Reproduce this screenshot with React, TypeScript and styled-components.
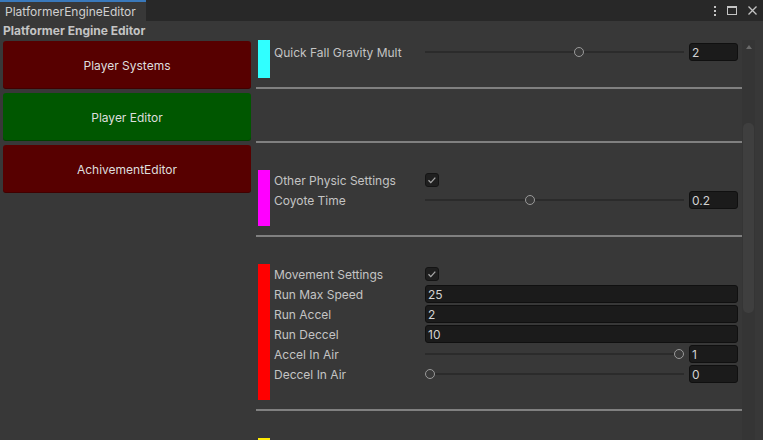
import * as React from 'react';
import styled, { createGlobalStyle } from 'styled-components';

const GlobalStyle = createGlobalStyle`
    html, body {
        margin: 0;
        padding: 0;
        background: #383838;
    }
    body {
        font-family: Inter, "Noto Sans", sans-serif;
        font-size: 12px;
        color: #c4c4c4;
        overflow: hidden;
    }
    * {
        box-sizing: border-box;
    }
`;

const colors = {
    bg: '#383838',
    tabBar: '#282828',
    label: '#c4c4c4',
    field: '#1b1b1b',
    fieldBorder: '#101010',
    divider: '#808080',
    accent: '#3a79bb'
};

const Window = styled.div`
    width: 763px;
    height: 440px;
    display: flex;
    flex-direction: column;
    background: ${colors.bg};
    overflow: hidden;
`;

const TabBar = styled.div`
    height: 21px;
    flex: none;
    display: flex;
    align-items: stretch;
    background: ${colors.tabBar};
`;

const Tab = styled.div`
    width: 146px;
    background: ${colors.bg};
    border-top: 2px solid ${colors.accent};
    padding-left: 5px;
    display: flex;
    align-items: center;
    color: #d0d0d0;
`;

const TabSpacer = styled.div`
    flex: 1;
`;

const TabIcons = styled.div`
    display: flex;
    align-items: center;
    gap: 11px;
    padding-right: 6px;

    svg {
        display: block;
    }
`;

const Header = styled.div`
    height: 19px;
    flex: none;
    padding-left: 3px;
    display: flex;
    align-items: center;
    font-weight: 700;
    color: ${colors.label};
`;

const Main = styled.div`
    flex: 1;
    min-height: 0;
    display: flex;
`;

const SidePanel = styled.div`
    width: 254px;
    flex: none;
    padding: 1px 3px 0;
    display: flex;
    flex-direction: column;
    gap: 4px;
`;

const NavButton = styled.div<{ $active?: boolean }>`
    height: 48px;
    border-radius: 3px;
    background: ${p => (p.$active ? '#005700' : '#570000')};
    box-shadow: inset 0 -1px 0 rgba(0, 0, 0, 0.25);
    color: #dedede;
    display: flex;
    align-items: center;
    justify-content: center;
`;

const ScrollView = styled.div`
    flex: 1;
    display: flex;
    padding-left: 2px;
    min-width: 0;
`;

const Viewport = styled.div`
    flex: 1;
    overflow: hidden;
`;

const Scrollbar = styled.div`
    width: 13px;
    flex: none;
    background: #353535;
    display: flex;
    flex-direction: column;
    align-items: center;
`;

const ScrollArrow = styled.div`
    height: 14px;
    display: flex;
    align-items: center;
    justify-content: center;

    &::before {
        content: '';
        border-left: 3.5px solid transparent;
        border-right: 3.5px solid transparent;
        border-bottom: 4px solid #6a6a6a;
    }
`;

const ScrollThumb = styled.div`
    width: 11px;
    height: 190px;
    margin-top: 69px;
    border-radius: 5px;
    background: #3f3f3f;
`;

const RightGutter = styled.div`
    width: 8px;
    flex: none;
`;

// the first section is scrolled partly out of view, so it has no top padding
const Section = styled.div<{ $clipped?: boolean }>`
    padding: ${p => (p.$clipped ? '0' : '27px')} 0 9px;
`;

const SectionBody = styled.div`
    display: flex;
    gap: 4px;
`;

const ColorBar = styled.div<{ $color: string }>`
    width: 12px;
    margin-left: 2px;
    flex: none;
    background: ${p => p.$color};
`;

const Rows = styled.div<{ $clipped?: boolean }>`
    flex: 1;
    display: flex;
    flex-direction: column;
    padding: ${p => (p.$clipped ? '2px' : '0')} 4px 16px 0;
`;

const Divider = styled.div`
    height: 2px;
    background: ${colors.divider};
`;

const Row = styled.div`
    height: 18px;
    margin: 1px 0;
    display: grid;
    grid-template-columns: 151px 1fr;
    align-items: center;
`;

const Label = styled.div`
    color: ${colors.label};
    white-space: nowrap;
`;

const Field = styled.div<{ $width?: number }>`
    height: 18px;
    width: ${p => (p.$width ? `${p.$width}px` : 'auto')};
    flex: none;
    background: ${colors.field};
    border: 1px solid ${colors.fieldBorder};
    border-radius: 3px;
    padding-left: 2px;
    color: #d2d2d2;
    display: flex;
    align-items: center;
`;

const Checkbox = styled.div`
    width: 14px;
    height: 14px;
    background: #1f1f1f;
    border: 1px solid #141414;
    border-radius: 3px;

    svg {
        display: block;
    }
`;

const SliderBox = styled.div`
    display: flex;
    align-items: center;
    gap: 5px;
`;

const Track = styled.div`
    flex: 1;
    height: 18px;
    position: relative;

    &::before {
        content: '';
        position: absolute;
        left: 0;
        right: 0;
        top: 8px;
        height: 2px;
        background: #2b2b2b;
    }
`;

const Thumb = styled.div<{ $pos: number }>`
    position: absolute;
    top: 4px;
    left: calc(${p => p.$pos} * (100% - 10px));
    width: 10px;
    height: 10px;
    border-radius: 50%;
    border: 1px solid #9a9a9a;
    background: #3a3a3a;
`;

type RowData =
    | { label: string; kind: 'toggle' }
    | { label: string; kind: 'text'; value: string }
    | { label: string; kind: 'slider'; value: string; pos: number };

type SectionData = { color: string; rows: RowData[] };

const sections: SectionData[] = [
    {
        color: '#30ffff',
        rows: [{ label: 'Quick Fall Gravity Mult', kind: 'slider', value: '2', pos: 0.6 }]
    },
    { color: 'transparent', rows: [] },
    {
        color: '#ff00ff',
        rows: [
            { label: 'Other Physic Settings', kind: 'toggle' },
            { label: 'Coyote Time', kind: 'slider', value: '0.2', pos: 0.4 }
        ]
    },
    {
        color: '#ff0000',
        rows: [
            { label: 'Movement Settings', kind: 'toggle' },
            { label: 'Run Max Speed', kind: 'text', value: '25' },
            { label: 'Run Accel', kind: 'text', value: '2' },
            { label: 'Run Deccel', kind: 'text', value: '10' },
            { label: 'Accel In Air', kind: 'slider', value: '1', pos: 1 },
            { label: 'Deccel In Air', kind: 'slider', value: '0', pos: 0 }
        ]
    },
    { color: '#ffeb04', rows: [] }
];

function CheckIcon() {
    return (
        <svg width="12" height="12" viewBox="0 0 12 12">
            <path d="M2.5 6.3 L4.8 8.6 L9.3 3.6" fill="none" stroke="#a8a8a8" strokeWidth="1.3" />
        </svg>
    );
}

function PropertyRow({ row }: { row: RowData }) {
    let control: React.ReactNode;
    if (row.kind === 'toggle') {
        control = (
            <Checkbox>
                <CheckIcon />
            </Checkbox>
        );
    } else if (row.kind === 'text') {
        control = <Field>{row.value}</Field>;
    } else {
        control = (
            <SliderBox>
                <Track>
                    <Thumb $pos={row.pos} />
                </Track>
                <Field $width={49}>{row.value}</Field>
            </SliderBox>
        );
    }
    return (
        <Row>
            <Label>{row.label}</Label>
            {control}
        </Row>
    );
}

export default function App() {
    return (
        <Window>
            <GlobalStyle />
            <TabBar>
                <Tab>PlatformerEngineEditor</Tab>
                <TabSpacer />
                <TabIcons>
                    <svg width="2" height="10" viewBox="0 0 2 10">
                        <rect x="0" y="0" width="2" height="2" fill="#c4c4c4" />
                        <rect x="0" y="4" width="2" height="2" fill="#c4c4c4" />
                        <rect x="0" y="8" width="2" height="2" fill="#c4c4c4" />
                    </svg>
                    <svg width="10" height="9" viewBox="0 0 10 9">
                        <rect x="0.5" y="0.5" width="9" height="8" fill="none" stroke="#c4c4c4" />
                        <rect x="0" y="0" width="10" height="2" fill="#c4c4c4" />
                    </svg>
                    <svg width="9" height="9" viewBox="0 0 9 9">
                        <path d="M0.5 0.5 L8.5 8.5 M8.5 0.5 L0.5 8.5" stroke="#c4c4c4" strokeWidth="1.3" />
                    </svg>
                </TabIcons>
            </TabBar>
            <Header>Platformer Engine Editor</Header>
            <Main>
                <SidePanel>
                    <NavButton>Player Systems</NavButton>
                    <NavButton $active>Player Editor</NavButton>
                    <NavButton>AchivementEditor</NavButton>
                </SidePanel>
                <ScrollView>
                    <Viewport>
                        {sections.map((s, i) => (
                            <React.Fragment key={i}>
                                <Section $clipped={i === 0}>
                                    <SectionBody>
                                        <ColorBar $color={s.color} />
                                        <Rows $clipped={i === 0}>
                                            {s.rows.map(r => (
                                                <PropertyRow key={r.label} row={r} />
                                            ))}
                                        </Rows>
                                    </SectionBody>
                                </Section>
                                <Divider />
                            </React.Fragment>
                        ))}
                    </Viewport>
                    <Scrollbar>
                        <ScrollArrow />
                        <ScrollThumb />
                    </Scrollbar>
                    <RightGutter />
                </ScrollView>
            </Main>
        </Window>
    );
}
